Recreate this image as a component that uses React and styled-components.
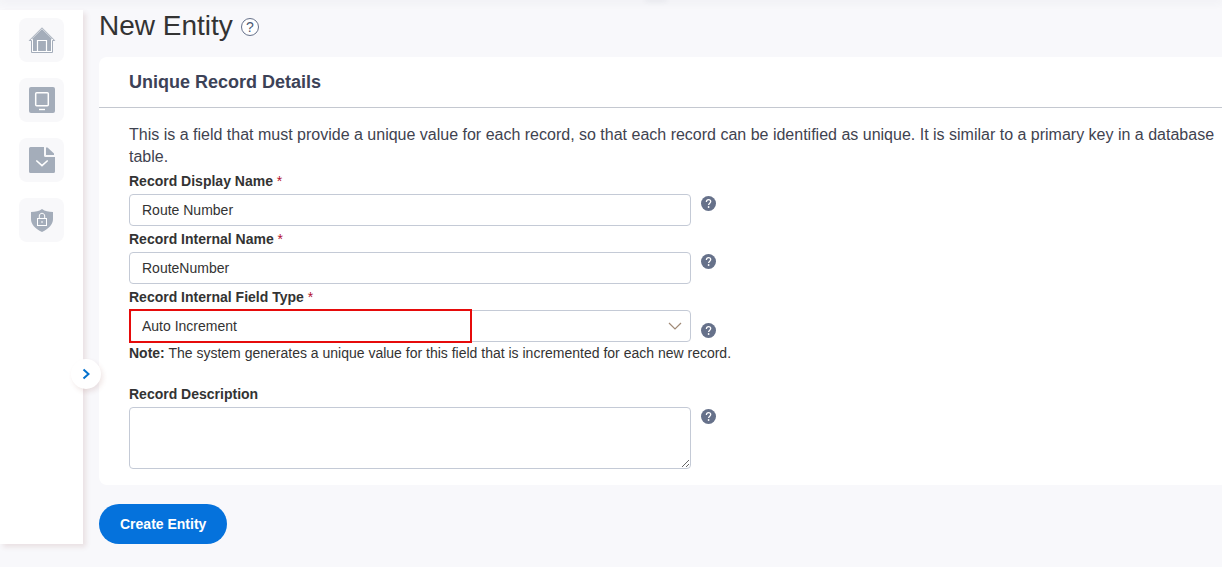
import styled, { createGlobalStyle } from "styled-components";

const App = () => {
  return (
    <>
      <GlobalStyle />
      <TopBar>
        <TopHandle />
      </TopBar>
      <Page>
        <Sidebar>
          <NavButton aria-label="Home">
            <HomeIcon />
          </NavButton>
          <NavButton aria-label="Devices">
            <DeviceIcon />
          </NavButton>
          <NavButton aria-label="Forms">
            <FormIcon />
          </NavButton>
          <NavButton aria-label="Security">
            <ShieldIcon />
          </NavButton>
          <ExpandButton aria-label="Expand menu">
            <svg width="8" height="12" viewBox="0 0 8 12" fill="none">
              <path d="M1.5 1.5 6.5 6l-5 4.5" stroke="#0572ce" strokeWidth="2" />
            </svg>
          </ExpandButton>
        </Sidebar>
        <Main>
          <TitleRow>
            <Title>New Entity</Title>
            <TitleHelp aria-label="Help">?</TitleHelp>
          </TitleRow>
          <Card>
            <CardHeader>Unique Record Details</CardHeader>
            <CardBody>
              <Intro>
                This is a field that must provide a unique value for each
                record, so that each record can be identified as unique. It is
                similar to a primary key in a database table.
              </Intro>

              <Label htmlFor="displayName">
                Record Display Name <Required>*</Required>
              </Label>
              <FieldRow>
                <Input id="displayName" defaultValue="Route Number" />
                <Help />
              </FieldRow>

              <Label htmlFor="internalName">
                Record Internal Name <Required>*</Required>
              </Label>
              <FieldRow>
                <Input id="internalName" defaultValue="RouteNumber" />
                <Help />
              </FieldRow>

              <Label htmlFor="fieldType">
                Record Internal Field Type <Required>*</Required>
              </Label>
              <FieldRow>
                <SelectWrap>
                  <Select id="fieldType" defaultValue="auto">
                    <option value="auto">Auto Increment</option>
                    <option value="text">Text</option>
                  </Select>
                  <Chevron width="14" height="8" viewBox="0 0 14 8" fill="none">
                    <path d="M1 1l6 6 6-6" stroke="#a08a76" strokeWidth="1.2" />
                  </Chevron>
                  <Highlight />
                </SelectWrap>
                <Help $end />
              </FieldRow>
              <Note>
                <b>Note:</b> The system generates a unique value for this field
                that is incremented for each new record.
              </Note>

              <Label htmlFor="description">Record Description</Label>
              <FieldRow>
                <TextArea id="description" />
                <Help />
              </FieldRow>
            </CardBody>
          </Card>
          <SubmitButton>Create Entity</SubmitButton>
        </Main>
      </Page>
    </>
  );
};

export default App;

const Help = ({ $end }) => (
  <HelpButton type="button" aria-label="Help" $end={$end}>
    <svg width="15" height="15" viewBox="0 0 15 15" fill="none">
      <circle cx="7.5" cy="7.5" r="7.5" fill="#66718a" />
      <path
        d="M5.4 5.9c0-1.4.9-2.3 2.1-2.3s2.2.8 2.2 2c0 1.5-2.1 1.6-2.1 3.4"
        stroke="#fff"
        strokeWidth="1.3"
      />
      <circle cx="7.6" cy="11" r="0.9" fill="#fff" />
    </svg>
  </HelpButton>
);

const HomeIcon = () => (
  <svg width="28" height="28" viewBox="0 0 28 28" fill="none">
    <path
      d="M1.3 14.5 14 1.8l12.7 12.7h-2.2v12h-21v-12z"
      fill="#fff"
      stroke="#a4adba"
    />
    <path d="M3.6 13.3 14 3.1l10.4 10.2H23V25H5V13.3z" fill="#a4adba" />
    <path d="M9.5 25V14.5h9V25" stroke="#fff" strokeWidth="1.2" />
    <path d="M11.5 16.5h5V25h-5z" fill="#a4adba" />
  </svg>
);

const DeviceIcon = () => (
  <svg width="28" height="28" viewBox="0 0 28 28" fill="none">
    <rect x="1" y="1" width="26" height="26" rx="2" fill="#a4adba" />
    <rect x="7.7" y="6.7" width="12.6" height="13" rx="1" stroke="#fff" strokeWidth="1.5" />
    <path d="M11 23.5h6" stroke="#fff" strokeWidth="1.4" />
  </svg>
);

const FormIcon = () => (
  <svg width="28" height="28" viewBox="0 0 28 28" fill="none">
    <path
      d="M2.5 1H16v8.500a1.500 1.500 0 0 0 1.500 1.500H27v14.500a1.500 1.500 0 0 1-1.500 1.500h-23A1.500 1.500 0 0 1 1 25.500v-23A1.500 1.500 0 0 1 2.500 1z"
      fill="#a4adba"
    />
    <path d="M18 1.5h1.5L26 7.5V9h-8z" fill="#a4adba" />
    <path d="m8.3 14.5 5.7 5.2 5.7-5.2" stroke="#fff" strokeWidth="1.6" />
  </svg>
);

const ShieldIcon = () => (
  <svg width="28" height="28" viewBox="0 0 28 28" fill="none">
    <path
      d="M14 3c3 2.2 6.5 3 11 3v7c0 5.5-4 9.5-11 13C7 22.5 3 18.5 3 13V6c4.500 0 8-.8 11-3z"
      fill="#a4adba"
    />
    <rect x="9.5" y="12.5" width="9" height="7" stroke="#fff" />
    <path d="M11.3 12.5V10c0-3.6 5.4-3.6 5.4 0v2.5M14 15v2" stroke="#fff" />
  </svg>
);

const GlobalStyle = createGlobalStyle`
  * {
    box-sizing: border-box;
  }
  body {
    margin: 0;
    background: #f8f8fb;
    color: #333;
    font-family: "Liberation Sans", Arial, sans-serif;
    font-size: 14px;
  }
  button, input, select, textarea {
    font: inherit;
    color: inherit;
  }
`;

const TopBar = styled.header`
  display: flex;
  justify-content: center;
  height: 0;
  box-shadow: 0 0 8px 1px rgba(60, 70, 90, 0.14);
`;

const TopHandle = styled.div`
  width: 20px;
  height: 0;
  margin-left: 90px;
  box-shadow: 0 0 5px 1px rgba(60, 70, 90, 0.12);
`;

const Page = styled.div`
  display: flex;
  min-height: 100vh;
`;

const Sidebar = styled.nav`
  position: relative;
  display: flex;
  flex-direction: column;
  flex-shrink: 0;
  gap: 16px;
  width: 83px;
  margin: 10px 16px 23px 0;
  padding: 8px 19px;
  background: #fff;
  box-shadow: 3px 3px 5px rgba(130, 60, 50, 0.12);
`;

const NavButton = styled.button`
  display: flex;
  align-items: center;
  justify-content: center;
  width: 45px;
  height: 44px;
  padding: 0;
  border: none;
  border-radius: 8px;
  background: #f8f8fa;
  cursor: pointer;
`;

const ExpandButton = styled.button`
  position: absolute;
  top: 349px;
  right: -18px;
  display: flex;
  align-items: center;
  justify-content: center;
  width: 30px;
  height: 30px;
  padding: 0;
  border: none;
  border-radius: 50%;
  background: #fff;
  box-shadow: 2px 3px 5px rgba(130, 60, 50, 0.12);
  cursor: pointer;
`;

const Main = styled.main`
  flex: 1;
  min-width: 0;
  padding: 8px 0 23px;
`;

const TitleRow = styled.div`
  display: flex;
  align-items: center;
  gap: 8px;
  height: 36px;
  margin-bottom: 13px;
`;

const Title = styled.h1`
  margin: 0;
  font-size: 28px;
  font-weight: 400;
  line-height: 36px;
`;

const TitleHelp = styled.button`
  width: 18px;
  height: 18px;
  margin-top: 2px;
  padding: 0;
  border: 1px solid #66718a;
  border-radius: 50%;
  background: #fff;
  color: #4c5872;
  font-size: 14px;
  line-height: 16px;
  cursor: pointer;
`;

const Card = styled.section`
  border-radius: 8px 0 0 8px;
  background: #fff;
`;

const CardHeader = styled.h2`
  margin: 0;
  padding: 0 30px;
  border-bottom: 1px solid #c4c8d0;
  color: #3c4257;
  font-size: 18px;
  line-height: 50px;
`;

const CardBody = styled.div`
  padding: 16px 0 16px 30px;
`;

const Intro = styled.p`
  margin: 0;
  color: #3f4350;
  font-size: 16px;
  line-height: 22px;
`;

const Label = styled.label`
  display: block;
  font-weight: 700;
  line-height: 26px;
`;

const Required = styled.span`
  color: #b3122f;
  font-weight: 400;
`;

const FieldRow = styled.div`
  display: flex;
  gap: 10px;
`;

const Input = styled.input`
  width: 562px;
  height: 32px;
  padding: 0 12px;
  border: 1px solid #c4cad6;
  border-radius: 4px;
  background: #fff;
`;

const SelectWrap = styled.div`
  position: relative;
  width: 562px;
`;

const Select = styled(Input).attrs({ as: "select" })`
  display: block;
  width: 100%;
  appearance: none;
`;

const Chevron = styled.svg`
  position: absolute;
  top: 12px;
  right: 9px;
  pointer-events: none;
`;

const Highlight = styled.div`
  position: absolute;
  top: -1px;
  left: 0;
  width: 343px;
  height: 34px;
  border: 2px solid #e60b0b;
  pointer-events: none;
`;

const TextArea = styled.textarea`
  display: block;
  width: 562px;
  height: 62px;
  padding: 6px 12px;
  border: 1px solid #c4cad6;
  border-radius: 4px;
  background: #fff;
  resize: both;
`;

const HelpButton = styled.button`
  display: block;
  align-self: ${(props) => (props.$end ? "flex-end" : "flex-start")};
  width: 15px;
  height: 15px;
  margin: ${(props) => (props.$end ? "0 0 4px" : "2px 0 0")};
  padding: 0;
  border: none;
  background: none;
  cursor: pointer;

  svg {
    display: block;
  }
`;

const Note = styled.p`
  margin: 0 0 17px;
  line-height: 22px;
`;

const SubmitButton = styled.button`
  height: 40px;
  margin-top: 19px;
  padding: 0 21px;
  border: none;
  border-radius: 20px;
  background: #0572dc;
  color: #fff;
  font-weight: 700;
  cursor: pointer;
`;
